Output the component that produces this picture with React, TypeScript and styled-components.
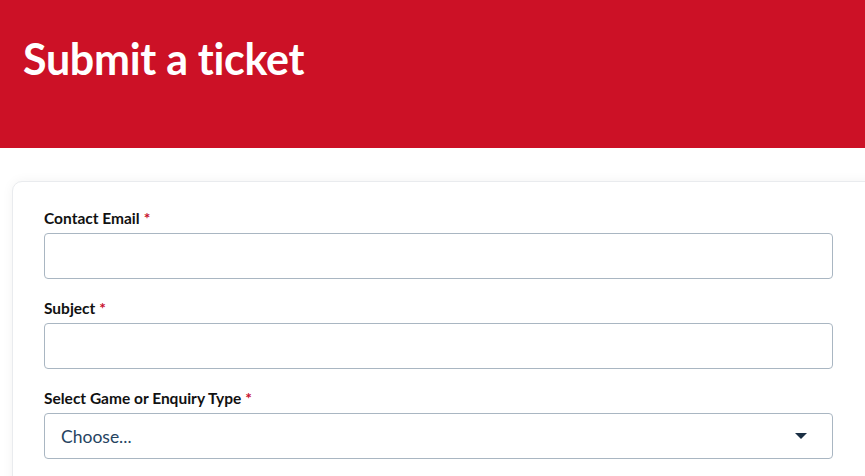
import styled, { createGlobalStyle } from "styled-components";

const GlobalStyle = createGlobalStyle`
  html, body {
    margin: 0;
    padding: 0;
    background: #ffffff;
    overflow: hidden;
    font-family: "Lato", "Open Sans", sans-serif;
  }
`;

const Header = styled.header`
  background-color: #cc1126;
  height: 148px;
  box-sizing: border-box;
  padding: 33px 23px 0;
`;
const Title = styled.h1`
  margin: 0;
  color: #ffffff;
  font-family: "Lato", sans-serif;
  font-weight: 700;
  font-size: 43px;
  letter-spacing: -0.3px;
`;
const Page = styled.main`
  padding-top: 33px;
`;
const Card = styled.section`
  margin-left: 12px;
  margin-right: -14px;
  padding: 27px 45px 20px 31px;
  border: 1px solid #e9ebee;
  border-radius: 10px;
  box-shadow: 0 0 12px rgba(0, 0, 0, 0.05);
  background: #ffffff;
`;
const Field = styled.div`
  display: flex;
  flex-direction: column;
  margin-bottom: 20px;
`;
const Label = styled.label`
  font-size: 15.5px;
  font-weight: 700;
  color: #111111;
  margin-bottom: 6px;
  line-height: 18px;
`;
const Required = styled.span`
  color: #c8102e;
  margin-left: 4px;
`;
const Input = styled.input`
  height: 46px;
  box-sizing: border-box;
  border: 1px solid #a9b6c2;
  border-radius: 4px;
  padding: 0 16px;
  font-size: 16px;
  font-family: inherit;
  outline: none;
`;
const SelectBox = styled.div`
  height: 46px;
  box-sizing: border-box;
  border: 1px solid #a9b6c2;
  border-radius: 4px;
  padding: 0 25px 0 16px;
  display: flex;
  align-items: center;
  justify-content: space-between;
  color: #26445f;
  font-size: 17.5px;
`;
const Arrow = styled.span`
  width: 0;
  height: 0;
  border-left: 6px solid transparent;
  border-right: 6px solid transparent;
  border-top: 6px solid #1b2f44;
`;

export default function App() {
  return (
    <>
      <GlobalStyle />
      <Header>
        <Title>Submit a ticket</Title>
      </Header>
      <Page>
        <Card>
          <Field>
            <Label>
              Contact Email<Required>*</Required>
            </Label>
            <Input type="email" />
          </Field>
          <Field>
            <Label>
              Subject<Required>*</Required>
            </Label>
            <Input type="text" />
          </Field>
          <Field>
            <Label>
              Select Game or Enquiry Type<Required>*</Required>
            </Label>
            <SelectBox>
              <span>Choose...</span>
              <Arrow />
            </SelectBox>
          </Field>
        </Card>
      </Page>
    </>
  );
}
